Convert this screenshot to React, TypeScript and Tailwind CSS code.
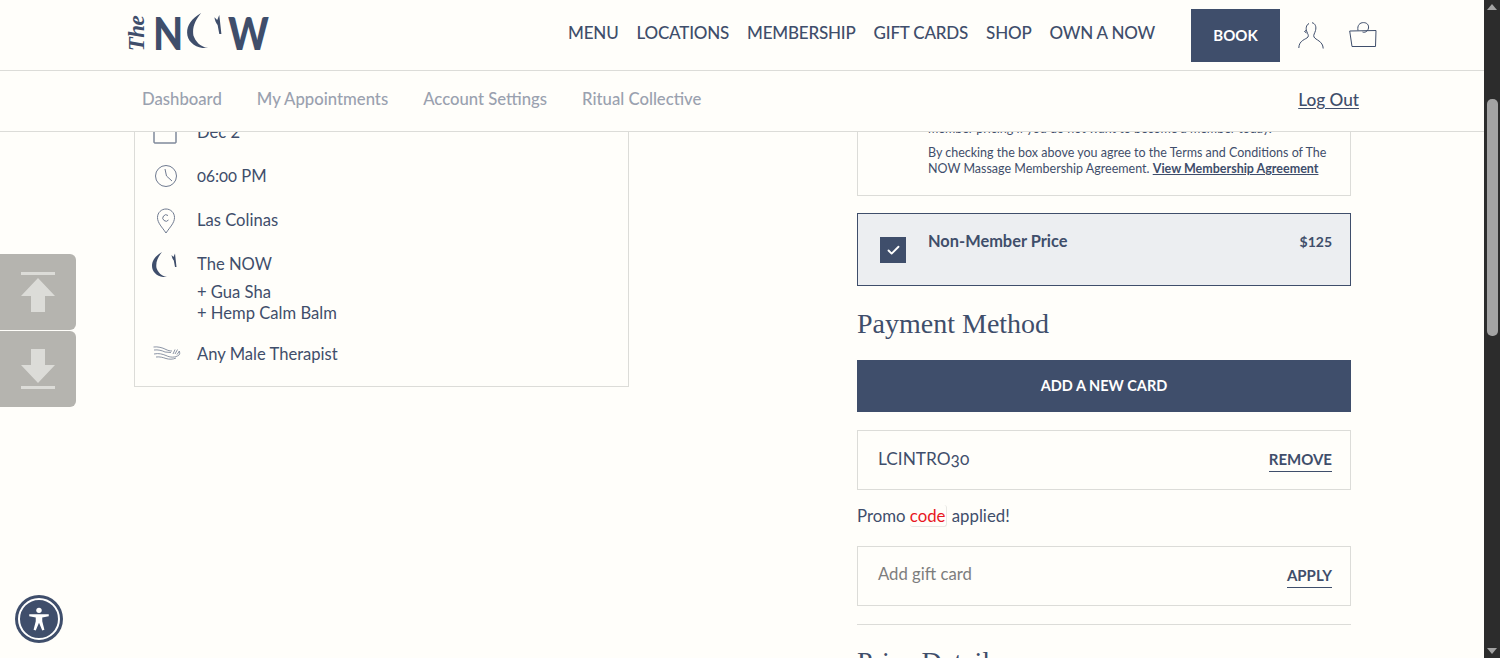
import { Check } from "lucide-react";

const navItems = ["MENU", "LOCATIONS", "MEMBERSHIP", "GIFT CARDS", "SHOP", "OWN A NOW"];
const subItems = ["Dashboard", "My Appointments", "Account Settings", "Ritual Collective"];

function Moon({ className }: { className?: string }) {
  return (
    <svg viewBox="0 0 27 25" className={className} fill="#3f4e6b">
      <path d="M10 0 C3 4 0 9 0 14 C0 21 7 26 15 25 C9 24 6 20 4.500 16 C3.500 10 6 5 10 0 Z" />
      <path d="M19.500 3 L21.500 5 L23 1.500 L24.500 15 L23 15 L21.800 8.500 C20.800 7.500 19.800 5 19.500 3 Z" />
    </svg>
  );
}

function Logo() {
  return (
    <div className="flex items-start h-[36px] text-[#3f4e6b] -mt-[5px]">
      <span className="w-[22px] h-[34px] mt-[2px] flex items-center justify-center">
        <span className="-rotate-90 font-['Liberation_Serif',serif] italic font-bold text-[23px] leading-none tracking-tight">
          The
        </span>
      </span>
      <span className="w-[30px] ml-[5px] mt-[1px] origin-left scale-x-[0.85] font-['Lato',sans-serif] font-black text-[46px] leading-[34px]">
        N
      </span>
      <Moon className="w-[38px] h-[35px] ml-[4px] -mt-[2px]" />
      <span className="w-[40px] ml-[3px] mt-[1px] origin-left scale-x-[0.84] font-['Lato',sans-serif] font-black text-[46px] leading-[34px]">
        W
      </span>
    </div>
  );
}

function UserIcon() {
  return (
    <svg viewBox="0 0 26 27" className="w-[26px] h-[27px]" fill="none" stroke="#3f4e6b" strokeWidth="1">
      <path d="M11 1.500 C8 3 7.500 7 9 10 C9.500 12 11 13 10 15 C8 17.500 1 18 0.800 26" />
      <path d="M14 0.700 C17.500 1.500 18.500 5 17.500 8.500 C17 11 15 13 16 15 C17.500 18 25 19 25.200 26.500" />
      <path d="M8.500 8 L6.500 9.500 L8.500 11" />
    </svg>
  );
}

function BagIcon() {
  return (
    <svg viewBox="0 0 28 26" className="w-[28px] h-[26px]" fill="none" stroke="#3f4e6b" strokeWidth="1">
      <path d="M0.700 9 L27 8.500 L26.500 24.500 L3 24.500 Z" />
      <path d="M9 8.500 C8 3 11 0.600 14.500 0.600 C18 0.600 20 3 19.500 6 C19 9.500 15.500 11 13.500 10" />
    </svg>
  );
}

function CalendarIcon() {
  return (
    <svg viewBox="0 0 24 24" className="w-[24px] h-[24px]" fill="none" stroke="#3f4e6b" strokeWidth="1">
      <rect x="1" y="0.500" width="22" height="22.500" rx="0.500" />
    </svg>
  );
}

function ClockIcon() {
  return (
    <svg viewBox="0 0 24 24" className="w-[24px] h-[24px] ml-[1px]" fill="none" stroke="#6f7a90" strokeWidth="1">
      <circle cx="12" cy="12" r="10.500" />
      <path d="M11 5 L12.500 12 L18 17" />
    </svg>
  );
}

function PinIcon() {
  return (
    <svg viewBox="0 0 20 26" className="w-[20px] h-[26px] ml-[3px]" fill="none" stroke="#6f7a90" strokeWidth="1">
      <path d="M10 25 C6 19 1.500 15 1.500 9.500 C1.500 4.500 5.500 1 10 1 C14.500 1 18.500 4.500 18.500 9.500 C18.500 15 14 19 10 25 Z" />
      <path d="M12 7.500 A3.200 3.200 0 1 0 12.500 12" />
    </svg>
  );
}

function HandIcon() {
  return (
    <svg viewBox="0 0 28 15" className="w-[28px] h-[15px]" fill="none" stroke="#6f7a90" strokeWidth="0.800">
      <path d="M0.500 1 C5 0.500 9 1.500 13 3.500 C15 4.500 17 5 19 5" />
      <path d="M1 4 C5 3.500 9 4.500 12 6 L18 6.500" />
      <path d="M1 8 C6 7 9 8 13 9.500 C17 11.500 22 12 26 9 C27 8 27 6.500 26 5" />
      <path d="M3 11 C7 10.500 10 11.500 13 12.500 C16 13.500 20 13.500 23 12" />
      <path d="M20 8 L22 3.500 M22 8 L24.500 3.500 M24 8.500 L26.500 5" />
    </svg>
  );
}

function SideButton({ down }: { down?: boolean }) {
  return (
    <div className="w-[76px] h-[76px] rounded-r-[6px] bg-[#b5b4af] flex items-center justify-center">
      <svg viewBox="0 0 36 40" className={`w-[36px] h-[40px] ${down ? "rotate-180" : ""}`} fill="#dcdcd8">
        <rect x="1" y="0" width="34" height="3" />
        <path d="M18 6 L35 24 L25 24 L25 40 L11 40 L11 24 L1 24 Z" />
      </svg>
    </div>
  );
}

function DetailRow({ icon, children }: { icon: React.ReactNode; children: React.ReactNode }) {
  return (
    <div className="flex">
      <div className="w-[62px] pl-[18px] flex justify-start">{icon}</div>
      <div>{children}</div>
    </div>
  );
}

export default function App() {
  return (
    <div className="relative h-[658px] overflow-hidden flex bg-[#fffefa] text-[#3f4e6b] font-['Lato',sans-serif]">
      <div className="flex-1 min-w-0 flex flex-col">
        <header className="h-[71px] shrink-0 border-b border-[#dcdcd8] flex items-center pl-[126px] pr-[107px]">
          <Logo />
          <nav className="ml-auto pb-[4px] flex items-center gap-[18px] text-[17px] font-medium tracking-[-0.2px]">
            {navItems.map((item) => (
              <a key={item}>{item}</a>
            ))}
          </nav>
          <button className="ml-[36px] w-[89px] h-[53px] bg-[#3f4e6b] text-white text-[15px] font-bold">BOOK</button>
          <div className="ml-[18px] flex items-center gap-[25px]">
            <UserIcon />
            <BagIcon />
          </div>
        </header>

        <div className="h-[61px] shrink-0 border-b border-[#dcdcd8] flex items-center pl-[142px] pr-[125px] pb-[2px] text-[16.7px] font-medium">
          <div className="flex gap-[35px] text-[#9aa1af]">
            {subItems.map((item) => (
              <a key={item}>{item}</a>
            ))}
          </div>
          <a className="ml-auto underline underline-offset-2 text-[17.2px] text-[#3f4e6b]">Log Out</a>
        </div>

        <main className="flex-1 min-h-0 overflow-hidden flex justify-between items-start pl-[134px] pr-[133px]">
          {/* the page is scrolled, so both columns start above the fold */}
          <section className="w-[495px] mt-[-32px] pt-[20px] h-[287px] border border-t-0 border-[#dcdcd8] text-[16.6px] flex flex-col">
            <DetailRow icon={<CalendarIcon />}>
              <p className="leading-[24px]">Dec 2</p>
            </DetailRow>
            <div className="mt-[20px]">
              <DetailRow icon={<ClockIcon />}>
                <p className="leading-[24px] [font-variant-numeric:oldstyle-nums]">06:00 PM</p>
              </DetailRow>
            </div>
            <div className="mt-[20px]">
              <DetailRow icon={<PinIcon />}>
                <p className="leading-[24px]">Las Colinas</p>
              </DetailRow>
            </div>
            <div className="mt-[18px]">
              <DetailRow icon={<Moon className="w-[27px] h-[25px] -ml-[1px]" />}>
                <p className="leading-[24px]">The NOW</p>
                <p className="mt-[6px] leading-[21px]">+ Gua Sha</p>
                <p className="leading-[21px]">+ Hemp Calm Balm</p>
              </DetailRow>
            </div>
            <div className="mt-[18px]">
              <DetailRow icon={<span className="block pt-[4px]"><HandIcon /></span>}>
                <p className="leading-[24px]">Any Male Therapist</p>
              </DetailRow>
            </div>
          </section>

          <section className="w-[494px] mt-[-10px] shrink-0">
            <div className="h-[74px] border border-t-0 border-[#dcdcd8] pl-[70px] pr-[20px] text-[12.5px] leading-[16px] flex flex-col justify-end pb-[18px]">
              <p className="h-[16px]">member pricing if you do not want to become a member today.</p>
              <p className="mt-[8px]">
                By checking the box above you agree to the Terms and Conditions of The NOW Massage Membership Agreement.{" "}
                <a className="underline font-bold">View Membership Agreement</a>
              </p>
            </div>

            <div className="mt-[17px] h-[73px] border border-[#3f4e6b] bg-[#eceef1] flex pl-[22px] pr-[18px]">
              <span className="mt-[23px] w-[26px] h-[26px] bg-[#3f4e6b] flex items-center justify-center">
                <Check className="w-[15px] h-[15px] text-white" strokeWidth={3} />
              </span>
              <span className="ml-[22px] mt-[16px] text-[16.4px] leading-[22px] font-bold">Non-Member Price</span>
              <span className="ml-auto mt-[17px] text-[14px] leading-[22px] font-bold">$125</span>
            </div>

            <h2 className="mt-[20px] h-[36px] font-['Liberation_Serif',serif] text-[28px] leading-[36px]">Payment Method</h2>

            <button className="mt-[18px] w-full h-[52px] bg-[#3f4e6b] text-white text-[14.5px] font-bold">ADD A NEW CARD</button>

            <div className="mt-[18px] h-[60px] border border-[#dcdcd8] flex items-center pl-[20px] pr-[18px]">
              <span className="text-[17.3px] pb-[3px] [font-variant-numeric:oldstyle-nums]">LCINTRO30</span>
              <span className="ml-auto text-[15px] font-bold pb-[1px] border-b border-[#3f4e6b] leading-[22px]">REMOVE</span>
            </div>

            <p className="mt-[14px] text-[16.8px] leading-[24px]">
              Promo <span className="text-[#e8171f] border-r border-b border-[#e8e8e4] rounded-[3px] pr-[1px]">code</span> applied!
            </p>

            <div className="mt-[18px] h-[60px] border border-[#dcdcd8] flex items-center pl-[20px] pr-[18px]">
              <span className="text-[16.7px] text-[#7d7d7d] pb-[3px]">Add gift card</span>
              <span className="ml-auto text-[15px] font-bold pb-[1px] border-b border-[#3f4e6b] leading-[22px]">APPLY</span>
            </div>

            <div className="mt-[18px] border-t border-[#dcdcd8]" />
            <h2 className="mt-[19px] font-['Liberation_Serif',serif] text-[28px] leading-[36px]">Price Details</h2>
          </section>
        </main>
      </div>

      <div className="w-[16px] shrink-0 bg-[#2c2c2c] flex flex-col items-center justify-between py-[4px]">
        <span className="block w-0 h-0 border-x-[5px] border-x-transparent border-b-[6px] border-b-[#a3a3a3]" />
        <span className="block w-0 h-0 border-x-[5px] border-x-transparent border-t-[6px] border-t-[#a3a3a3]" />
      </div>
      {/* scrollbar thumb */}
      <div className="absolute right-[2px] top-[99px] w-[11px] h-[237px] rounded-[5px] bg-[#a3a3a3]" />

      <div className="absolute left-0 top-[254px] flex flex-col gap-[1px]">
        <SideButton />
        <SideButton down />
      </div>

      <div className="absolute left-[15px] top-[595px] w-[48px] h-[48px] rounded-full bg-[#3f4e6b] flex items-center justify-center">
        <div className="w-[42px] h-[42px] rounded-full border-2 border-white flex items-center justify-center">
          <svg viewBox="0 0 24 24" className="w-[26px] h-[26px]" fill="white">
            <circle cx="12" cy="4" r="2.500" />
            <path d="M3 7.500 L21 7.500 L21 9.500 L15 10.500 L15 14 L17 22 L15 22.500 L12 15.500 L9 22.500 L7 22 L9 14 L9 10.500 L3 9.500 Z" />
          </svg>
        </div>
      </div>
    </div>
  );
}
